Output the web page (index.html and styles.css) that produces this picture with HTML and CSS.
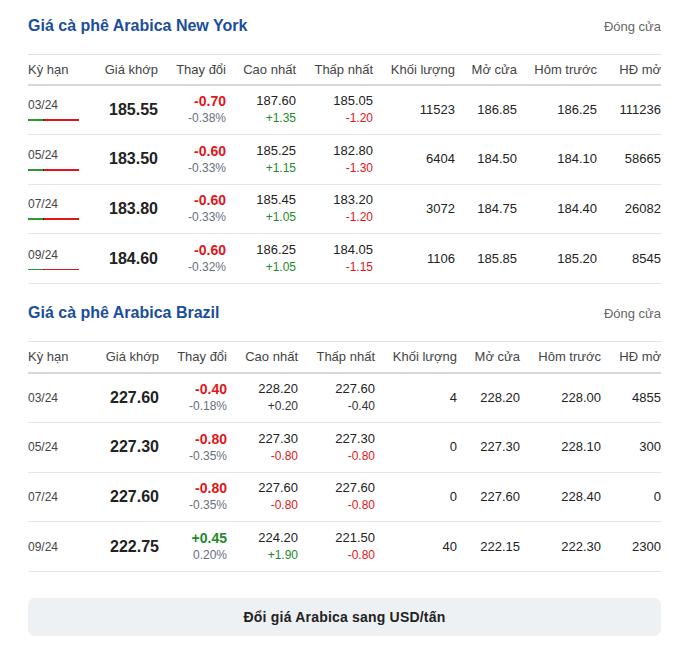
FILE: index.html
```html
<!DOCTYPE html>
<html lang="vi">
<head>
<meta charset="utf-8">
<title>Giá cà phê Arabica</title>
<link rel="stylesheet" href="styles.css">
</head>
<body>
<div class="page">
  <section class="block">
    <div class="head">
      <h2 class="title">Giá cà phê Arabica New York</h2>
      <span class="status">Đóng cửa</span>
    </div>
    <table class="prices t1">
      <thead>
        <tr><th class="c-term">Kỳ hạn</th><th>Giá khớp</th><th>Thay đổi</th><th>Cao nhất</th><th>Thấp nhất</th><th>Khối lượng</th><th>Mở cửa</th><th>Hôm trước</th><th>HĐ mở</th></tr>
      </thead>
      <tbody>
        <tr>
          <td class="c-term"><div class="term">03/24</div><div class="range"><span class="up"></span><span class="down"></span></div></td>
          <td class="price">185.55</td>
          <td><div class="chg down-t">-0.70</div><div class="pct">-0.38%</div></td>
          <td><div class="val">187.60</div><div class="sub up-t">+1.35</div></td>
          <td><div class="val">185.05</div><div class="sub down-t">-1.20</div></td>
          <td class="val">11523</td><td class="val">186.85</td><td class="val">186.25</td><td class="val">111236</td>
        </tr>
        <tr>
          <td class="c-term"><div class="term">05/24</div><div class="range"><span class="up"></span><span class="down"></span></div></td>
          <td class="price">183.50</td>
          <td><div class="chg down-t">-0.60</div><div class="pct">-0.33%</div></td>
          <td><div class="val">185.25</div><div class="sub up-t">+1.15</div></td>
          <td><div class="val">182.80</div><div class="sub down-t">-1.30</div></td>
          <td class="val">6404</td><td class="val">184.50</td><td class="val">184.10</td><td class="val">58665</td>
        </tr>
        <tr>
          <td class="c-term"><div class="term">07/24</div><div class="range"><span class="up"></span><span class="down"></span></div></td>
          <td class="price">183.80</td>
          <td><div class="chg down-t">-0.60</div><div class="pct">-0.33%</div></td>
          <td><div class="val">185.45</div><div class="sub up-t">+1.05</div></td>
          <td><div class="val">183.20</div><div class="sub down-t">-1.20</div></td>
          <td class="val">3072</td><td class="val">184.75</td><td class="val">184.40</td><td class="val">26082</td>
        </tr>
        <tr>
          <td class="c-term"><div class="term">09/24</div><div class="range thin"><span class="up"></span><span class="down"></span></div></td>
          <td class="price">184.60</td>
          <td><div class="chg down-t">-0.60</div><div class="pct">-0.32%</div></td>
          <td><div class="val">186.25</div><div class="sub up-t">+1.05</div></td>
          <td><div class="val">184.05</div><div class="sub down-t">-1.15</div></td>
          <td class="val">1106</td><td class="val">185.85</td><td class="val">185.20</td><td class="val">8545</td>
        </tr>
      </tbody>
    </table>
  </section>

  <section class="block">
    <div class="head">
      <h2 class="title">Giá cà phê Arabica Brazil</h2>
      <span class="status">Đóng cửa</span>
    </div>
    <table class="prices t2">
      <thead>
        <tr><th class="c-term">Kỳ hạn</th><th>Giá khớp</th><th>Thay đổi</th><th>Cao nhất</th><th>Thấp nhất</th><th>Khối lượng</th><th>Mở cửa</th><th>Hôm trước</th><th>HĐ mở</th></tr>
      </thead>
      <tbody>
        <tr>
          <td class="c-term"><div class="term">03/24</div></td>
          <td class="price">227.60</td>
          <td><div class="chg down-t">-0.40</div><div class="pct">-0.18%</div></td>
          <td><div class="val">228.20</div><div class="sub">+0.20</div></td>
          <td><div class="val">227.60</div><div class="sub">-0.40</div></td>
          <td class="val">4</td><td class="val">228.20</td><td class="val">228.00</td><td class="val">4855</td>
        </tr>
        <tr>
          <td class="c-term"><div class="term">05/24</div></td>
          <td class="price">227.30</td>
          <td><div class="chg down-t">-0.80</div><div class="pct">-0.35%</div></td>
          <td><div class="val">227.30</div><div class="sub down-t">-0.80</div></td>
          <td><div class="val">227.30</div><div class="sub down-t">-0.80</div></td>
          <td class="val">0</td><td class="val">227.30</td><td class="val">228.10</td><td class="val">300</td>
        </tr>
        <tr>
          <td class="c-term"><div class="term">07/24</div></td>
          <td class="price">227.60</td>
          <td><div class="chg down-t">-0.80</div><div class="pct">-0.35%</div></td>
          <td><div class="val">227.60</div><div class="sub down-t">-0.80</div></td>
          <td><div class="val">227.60</div><div class="sub down-t">-0.80</div></td>
          <td class="val">0</td><td class="val">227.60</td><td class="val">228.40</td><td class="val">0</td>
        </tr>
        <tr>
          <td class="c-term"><div class="term">09/24</div></td>
          <td class="price">222.75</td>
          <td><div class="chg up-t">+0.45</div><div class="pct">0.20%</div></td>
          <td><div class="val">224.20</div><div class="sub up-t">+1.90</div></td>
          <td><div class="val">221.50</div><div class="sub down-t">-0.80</div></td>
          <td class="val">40</td><td class="val">222.15</td><td class="val">222.30</td><td class="val">2300</td>
        </tr>
      </tbody>
    </table>
  </section>

  <button class="convert" type="button">Đổi giá Arabica sang USD/tấn</button>
</div>
</body>
</html>
```
FILE: styles.css
```css
* { box-sizing: border-box; }
html, body { margin: 0; padding: 0; background: #fff; }
body {
  font-family: "Liberation Sans", Arial, sans-serif;
  color: #222;
}
.page {
  width: 633px;
  margin-left: 28px;
  padding-top: 16px;
}
.block + .block { margin-top: 19px; }
.head {
  display: flex;
  justify-content: space-between;
  align-items: center;
  height: 20px;
  margin-bottom: 18px;
}
.title {
  margin: 0;
  font-size: 16px;
  line-height: 20px;
  font-weight: bold;
  color: #1b4e9b;
}
.status {
  font-size: 13px;
  color: #666;
}
.prices {
  width: 633px;
  border-collapse: collapse;
  table-layout: fixed;
  border-top: 1px solid #dfe3e8;
}
.prices th {
  font-weight: normal;
  font-size: 13px;
  color: #444;
  text-align: right;
  height: 30px;
  padding: 0;
  border-bottom: 2px solid #d3d8df;
  white-space: nowrap;
}
.t2 th { height: 31px; }
.prices th.c-term, .prices td.c-term { text-align: left; }
.t1 th:nth-child(1) { width: 70px; }
.t1 th:nth-child(2) { width: 60px; }
.t1 th:nth-child(3) { width: 68px; }
.t1 th:nth-child(4) { width: 70px; }
.t1 th:nth-child(5) { width: 77px; }
.t1 th:nth-child(6) { width: 82px; }
.t1 th:nth-child(7) { width: 62px; }
.t1 th:nth-child(8) { width: 80px; }
.t1 th:nth-child(9) { width: 64px; }
.t2 th:nth-child(1) { width: 70px; }
.t2 th:nth-child(2) { width: 61px; }
.t2 th:nth-child(3) { width: 68px; }
.t2 th:nth-child(4) { width: 71px; }
.t2 th:nth-child(5) { width: 77px; }
.t2 th:nth-child(6) { width: 82px; }
.t2 th:nth-child(7) { width: 63px; }
.t2 th:nth-child(8) { width: 81px; }
.t2 th:nth-child(9) { width: 60px; }
.prices td {
  height: 49.75px;
  padding: 0;
  text-align: right;
  vertical-align: middle;
  border-bottom: 1px solid #e3e7ec;
  white-space: nowrap;
}
.term {
  font-size: 12px;
  line-height: 14px;
  color: #444;
}
.range {
  display: flex;
  width: 51px;
  height: 2px;
  margin-top: 7px;
}
.range.thin { height: 1px; }
.range .up { width: 16px; background: #2e9a2e; border-right: 1px solid #222; }
.range .down { flex: 1; background: #e0161b; }
.price {
  font-size: 16px;
  font-weight: bold;
  color: #222;
}
.chg {
  font-size: 14px;
  font-weight: bold;
  line-height: 18px;
}
.pct {
  font-size: 12px;
  line-height: 17px;
  color: #667080;
}
.val {
  font-size: 13px;
  line-height: 18px;
  color: #222;
}
.sub {
  font-size: 12px;
  line-height: 17px;
  color: #333;
}
.down-t { color: #e0161b; }
.up-t { color: #1f8a2a; }
.convert {
  display: block;
  width: 633px;
  height: 38px;
  margin-top: 26px;
  border: none;
  border-radius: 7px;
  background: #eef1f4;
  font-family: "Liberation Sans", Arial, sans-serif;
  font-size: 14px;
  font-weight: bold;
  letter-spacing: 0.2px;
  color: #222;
  cursor: pointer;
}
```
